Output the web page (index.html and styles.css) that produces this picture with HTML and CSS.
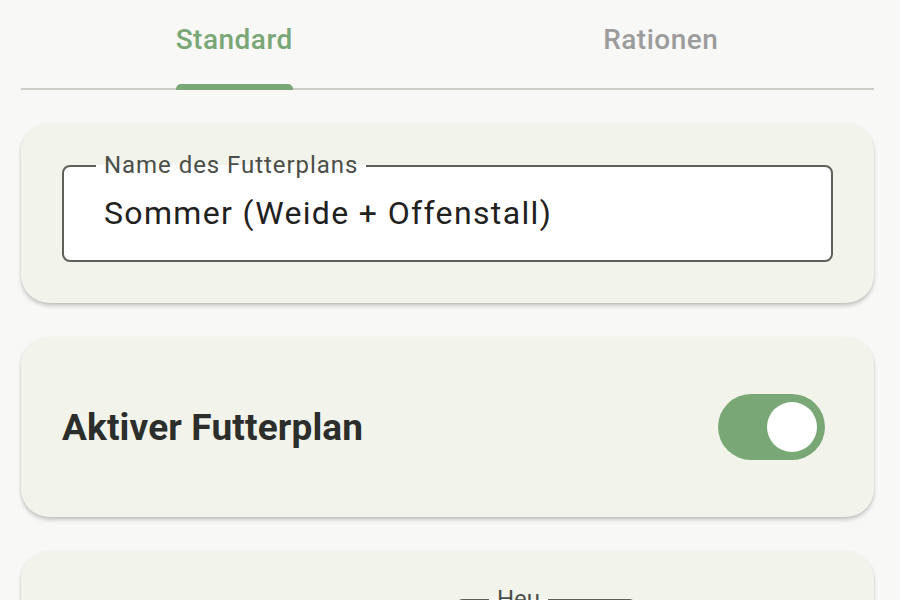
FILE: index.html
```html
<!DOCTYPE html>
<html lang="de">
<head>
<meta charset="utf-8">
<title>Futterplan</title>
<link rel="stylesheet" href="styles.css">
</head>
<body>
<div class="tabs">
  <div class="tab active"><span class="tab-label">Standard<span class="indicator"></span></span></div>
  <div class="tab"><span class="tab-label">Rationen</span></div>
</div>

<main class="content">
  <section class="card card-name">
    <div class="field">
      <span class="field-label">Name des Futterplans</span>
      <span class="field-value">Sommer (Weide + Offenstall)</span>
    </div>
  </section>

  <section class="card card-switch">
    <span class="title">Aktiver Futterplan</span>
    <span class="switch"><span class="thumb"></span></span>
  </section>

  <section class="card card-ration">
    <div class="row-lead"></div>
    <div class="field small">
      <span class="field-label">Heu</span>
    </div>
  </section>
</main>
</body>
</html>
```
FILE: styles.css
```css
* { box-sizing: border-box; }

html, body {
  margin: 0;
  padding: 0;
  background: #f8f8f7;
  font-family: Roboto, "Noto Sans", "Liberation Sans", sans-serif;
  height: 600px;
  overflow: hidden;
}

.tabs {
  display: grid;
  grid-template-columns: 1fr 1fr;
  margin: 0 26px 0 21px;
  border-bottom: 2px solid #cbcec5;
}

.tab {
  height: 88px;
  display: flex;
  justify-content: center;
  padding-top: 22px;
  font-size: 28px;
  font-weight: 500;
  letter-spacing: 0.5px;
  color: #9c9c9c;
}

.tab.active { color: #7aa776; }

.tab-label {
  position: relative;
  line-height: 36px;
  height: 67px;
}

.indicator {
  position: absolute;
  left: 0;
  right: 0;
  bottom: -1px;
  height: 6px;
  background: #7aa776;
  border-radius: 5px 5px 0 0;
}

.content {
  display: flex;
  flex-direction: column;
  gap: 34px;
  margin: 33px 26px 0 21px;
}

.card {
  background: #f2f4ec;
  border-radius: 28px;
  box-shadow: 0 3px 4px rgba(0, 0, 0, 0.18), 0 1px 2px rgba(0, 0, 0, 0.08);
  padding: 42px 41px 41px;
}

.field {
  position: relative;
  height: 97px;
  background: #ffffff;
  border: 2px solid #5d6159;
  border-radius: 8px;
  display: flex;
  align-items: center;
  padding-left: 40px;
}

.field-label {
  position: absolute;
  left: 32px;
  top: -16px;
  padding: 0 8px;
  font-size: 24px;
  line-height: 28px;
  letter-spacing: 0.95px;
  color: #4b4e48;
  background: linear-gradient(to bottom, #f2f4ec 50%, #ffffff 50%);
}

.field-value {
  font-size: 32px;
  letter-spacing: 1.35px;
  color: #1f211e;
  padding-bottom: 2px;
}

.card-switch {
  height: 180px;
  display: flex;
  align-items: center;
  justify-content: space-between;
  padding: 0 49px 0 41px;
}

.title {
  font-size: 37px;
  font-weight: 700;
  letter-spacing: 0.15px;
  color: #2c2e2b;
}

.switch {
  width: 107px;
  height: 66px;
  border-radius: 33px;
  background: #7aa776;
  display: flex;
  align-items: center;
  justify-content: flex-end;
  padding-right: 8px;
}

.thumb {
  width: 50px;
  height: 50px;
  border-radius: 50%;
  background: #ffffff;
}

.card-ration {
  height: 200px;
  display: flex;
  align-items: flex-start;
  padding-top: 48px;
}

.row-lead {
  width: 393px;
  flex: none;
}

.field.small {
  width: 182px;
  padding-left: 24px;
}

.field.small .field-label {
  left: 32px;
  letter-spacing: 0;
}
```
